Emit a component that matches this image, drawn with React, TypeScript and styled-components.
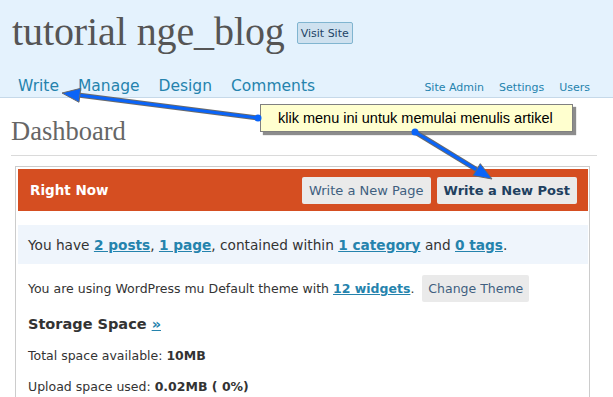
import React from "react";
import styled, { createGlobalStyle } from "styled-components";

const GlobalStyle = createGlobalStyle`
  html, body {
    margin: 0;
    padding: 0;
    background: #ffffff;
  }
  body {
    font-family: "DejaVu Sans", Verdana, sans-serif;
    width: 613px;
    height: 397px;
    overflow: hidden;
  }
`;

const Page = styled.div`
  position: relative;
  width: 613px;
  height: 397px;
  overflow: hidden;
`;

const Header = styled.div`
  background: #e4f2fd;
  border-bottom: 1px solid #c6d9e9;
  height: 98px;
  box-sizing: border-box;
  padding: 8px 0 0 12px;
  display: flex;
  flex-direction: column;
`;

const TitleRow = styled.div`
  display: flex;
  align-items: center;
  gap: 12px;
  height: 46px;
`;

const BlogTitle = styled.h1`
  margin: 0;
  font-family: "Liberation Serif", Georgia, serif;
  font-weight: normal;
  font-size: 40px;
  color: #555555;
  letter-spacing: -0.1px;
`;

const VisitButton = styled.span`
  display: inline-flex;
  align-items: center;
  height: 20px;
  padding: 0 3px;
  margin-top: 4px;
  background: #cee1ef;
  border: 1px solid #80b5d0;
  border-radius: 2px;
  color: #224466;
  font-size: 11px;
`;

const NavRow = styled.div`
  display: flex;
  justify-content: space-between;
  align-items: flex-end;
  margin-top: 23px;
  padding-left: 6px;
  padding-right: 23px;
`;

const MainNav = styled.div`
  display: flex;
  gap: 19px;
`;

const MainLink = styled.a`
  font-size: 15.5px;
  color: #2583ad;
  text-decoration: none;
`;

const SideNav = styled.div`
  display: flex;
  gap: 15px;
  padding-bottom: 1px;
`;

const SideLink = styled.a`
  font-size: 11px;
  color: #2583ad;
  text-decoration: none;
`;

const Content = styled.div`
  padding: 0 16px 0 11px;
`;

const PageTitle = styled.h2`
  margin: 0;
  padding: 19px 0 10px 0;
  font-family: "Liberation Serif", Georgia, serif;
  font-weight: normal;
  font-size: 26.5px;
  line-height: 28px;
  color: #666666;
  border-bottom: 1px solid #dadada;
`;

const Panel = styled.div`
  margin: 10px 0 0 4px;
  width: 575px;
  height: 260px;
  box-sizing: border-box;
  border: 1px solid #cccccc;
  border-bottom: none;
  padding: 2px 1px 0 2px;
`;

const PanelHeader = styled.div`
  background: #d54e21;
  height: 42px;
  display: flex;
  align-items: center;
  justify-content: space-between;
  padding: 0 11px 0 12px;
`;

const PanelTitle = styled.span`
  color: #ffffff;
  font-weight: bold;
  font-size: 13.5px;
`;

const Actions = styled.div`
  display: flex;
  gap: 6px;
`;

const Button = styled.span<{ $strong?: boolean }>`
  display: inline-flex;
  align-items: center;
  height: 27px;
  padding: 0 7px;
  background: #eaeaea;
  border-radius: 2px;
  color: ${(p) => (p.$strong ? "#21405f" : "#3f5f7f")};
  font-weight: ${(p) => (p.$strong ? "bold" : "normal")};
  font-size: 13px;
`;

const ThemeButton = styled(Button)`
  font-size: 12.5px;
  padding: 0 6px;
`;

const Stripe = styled.div`
  margin-top: 14px;
  background: #eff5fc;
  height: 39px;
  display: flex;
  align-items: center;
  padding-left: 10px;
`;

const Body = styled.div`
  padding: 0 10px;
`;

const Line = styled.p`
  margin: 0;
  font-size: 12.5px;
  color: #333333;
  display: flex;
  align-items: center;
  white-space: pre;
`;

const Summary = styled(Line)`
  font-size: 13.7px;
`;

const ThemeRow = styled(Line)`
  height: 28px;
  margin-top: 10px;
`;

const Link = styled.a`
  color: #2583ad;
  font-weight: bold;
  text-decoration: underline;
`;

const Subhead = styled.h3`
  margin: 10px 0 4px;
  font-size: 14.5px;
  font-weight: bold;
  color: #333333;
  height: 24px;
  display: flex;
  align-items: center;
`;

const StatLine = styled(Line)`
  height: 31px;
`;

const Strong = styled.b`
  color: #333333;
`;

const Callout = styled.div`
  position: absolute;
  left: 260px;
  top: 104px;
  width: 313px;
  height: 28px;
  box-sizing: border-box;
  background: #ffffcf;
  border: 1px solid #808080;
  box-shadow: 3px 3px 1px rgba(0, 0, 0, 0.45);
  font-family: "Liberation Sans", Arial, sans-serif;
  font-size: 14.5px;
  color: #000000;
  display: flex;
  align-items: center;
  padding-left: 17px;
`;

const Arrows = styled.svg`
  position: absolute;
  left: 0;
  top: 0;
  pointer-events: none;
`;

const Arrow = ({ x1, y1, x2, y2 }: { x1: number; y1: number; x2: number; y2: number }) => {
  const dx = x2 - x1;
  const dy = y2 - y1;
  const len = Math.hypot(dx, dy);
  const ux = dx / len;
  const uy = dy / len;
  const bx = x2 - ux * 18;
  const by = y2 - uy * 18;
  const px = -uy * 7;
  const py = ux * 7;
  const head = `${x2},${y2} ${bx + px},${by + py} ${bx - px},${by - py}`;
  return (
    <g>
      <line x1={x1} y1={y1} x2={bx} y2={by} stroke="#6a6a6a" strokeWidth={5} />
      <line x1={x1} y1={y1} x2={bx} y2={by} stroke="#0a64f8" strokeWidth={3} />
      <polygon points={head} fill="#0a64f8" stroke="#6a6a6a" strokeWidth={1} />
      <circle cx={x1} cy={y1} r={3.5} fill="#0a64f8" />
    </g>
  );
};

export default function App() {
  return (
    <Page>
      <GlobalStyle />
      <Header>
        <TitleRow>
          <BlogTitle>tutorial nge_blog</BlogTitle>
          <VisitButton>Visit Site</VisitButton>
        </TitleRow>
        <NavRow>
          <MainNav>
            <MainLink>Write</MainLink>
            <MainLink>Manage</MainLink>
            <MainLink>Design</MainLink>
            <MainLink>Comments</MainLink>
          </MainNav>
          <SideNav>
            <SideLink>Site Admin</SideLink>
            <SideLink>Settings</SideLink>
            <SideLink>Users</SideLink>
          </SideNav>
        </NavRow>
      </Header>
      <Content>
        <PageTitle>Dashboard</PageTitle>
        <Panel>
          <PanelHeader>
            <PanelTitle>Right Now</PanelTitle>
            <Actions>
              <Button>Write a New Page</Button>
              <Button $strong>Write a New Post</Button>
            </Actions>
          </PanelHeader>
          <Stripe>
            <Summary>
              You have <Link>2 posts</Link>, <Link>1 page</Link>, contained within{" "}
              <Link>1 category</Link> and <Link>0 tags</Link>.
            </Summary>
          </Stripe>
          <Body>
            <ThemeRow>
              You are using WordPress mu Default theme with <Link>12 widgets</Link>.{"  "}
              <ThemeButton>Change Theme</ThemeButton>
            </ThemeRow>
            <Subhead>
              Storage Space&nbsp;<Link>»</Link>
            </Subhead>
            <StatLine>
              Total space available: <Strong>10MB</Strong>
            </StatLine>
            <StatLine>
              Upload space used: <Strong>0.02MB ( 0%)</Strong>
            </StatLine>
          </Body>
        </Panel>
      </Content>
      <Callout>klik menu ini untuk memulai menulis artikel</Callout>
      <Arrows width={613} height={397}>
        <Arrow x1={258} y1={118} x2={62} y2={93} />
        <Arrow x1={415} y1={132} x2={492} y2={179} />
      </Arrows>
    </Page>
  );
}
